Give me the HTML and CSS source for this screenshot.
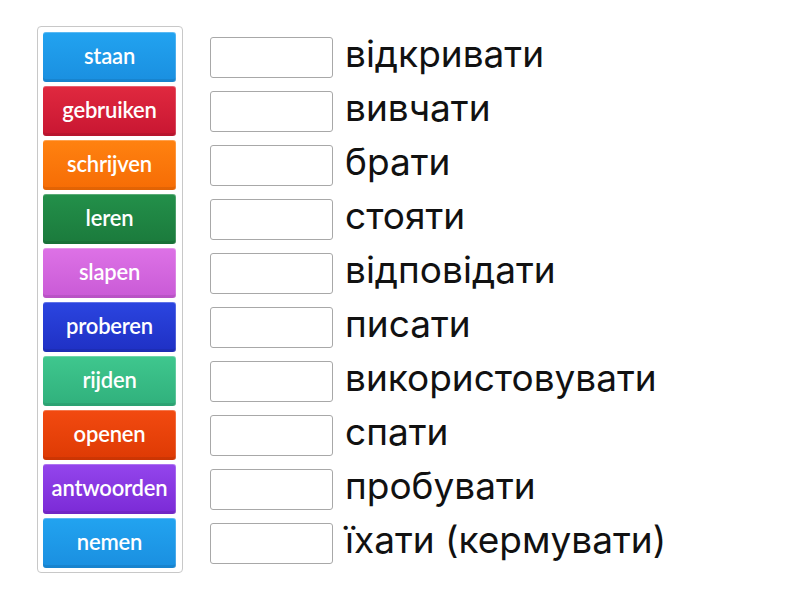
FILE: index.html
```html
<!DOCTYPE html>
<html>
<head>
<meta charset="utf-8">
<link rel="stylesheet" href="styles.css">
</head>
<body>
<div class="page">
  <div class="bank">
    <div class="tile blue">staan</div>
    <div class="tile red">gebruiken</div>
    <div class="tile orange">schrijven</div>
    <div class="tile green">leren</div>
    <div class="tile pink">slapen</div>
    <div class="tile indigo">proberen</div>
    <div class="tile teal">rijden</div>
    <div class="tile redorange">openen</div>
    <div class="tile purple">antwoorden</div>
    <div class="tile blue">nemen</div>
  </div>
  <div class="targets">
    <div class="row"><div class="box"></div><span class="word">відкривати</span></div>
    <div class="row"><div class="box"></div><span class="word">вивчати</span></div>
    <div class="row"><div class="box"></div><span class="word">брати</span></div>
    <div class="row"><div class="box"></div><span class="word">стояти</span></div>
    <div class="row"><div class="box"></div><span class="word">відповідати</span></div>
    <div class="row"><div class="box"></div><span class="word">писати</span></div>
    <div class="row"><div class="box"></div><span class="word">використовувати</span></div>
    <div class="row"><div class="box"></div><span class="word">спати</span></div>
    <div class="row"><div class="box"></div><span class="word">пробувати</span></div>
    <div class="row"><div class="box"></div><span class="word">їхати (кермувати)</span></div>
  </div>
</div>
</body>
</html>
```
FILE: styles.css
```css
html, body {
  margin: 0;
  padding: 0;
  background: #fff;
}
.page {
  display: flex;
  align-items: flex-start;
  padding: 26px 0 0 37px;
}
.bank {
  display: flex;
  flex-direction: column;
  gap: 4px;
  padding: 5px 6px 4px 5px;
  border: 1px solid #c8c8c8;
  border-radius: 4px;
  width: 133px;
}
.tile {
  height: 50px;
  box-sizing: border-box;
  padding-bottom: 4px;
  border-radius: 3px;
  display: flex;
  align-items: center;
  justify-content: center;
  color: #fff;
  font-family: Lato, "Open Sans", sans-serif;
  font-weight: 600;
  font-size: 22px;
  letter-spacing: -0.2px;
  white-space: nowrap;
  box-shadow: inset 0 1px 0 rgba(255,255,255,0.25), inset -1px 0 0 rgba(255,255,255,0.2), inset 0 -3px 0 rgba(0,0,0,0.08);
}
.blue { background: linear-gradient(#22a3f0, #1a8fe0); }
.red { background: linear-gradient(#e0293f, #c81632); }
.orange { background: linear-gradient(#ff8210, #f66c05); }
.green { background: linear-gradient(#23904a, #1b7a3c); }
.pink { background: linear-gradient(#dd72e6, #c95ad6); }
.indigo { background: linear-gradient(#2b45e0, #1f30c4); }
.teal { background: linear-gradient(#3fc78e, #30b07c); }
.redorange { background: linear-gradient(#f24a10, #de3a04); }
.purple { background: linear-gradient(#9445ec, #7b2ad6); }
.targets {
  display: flex;
  flex-direction: column;
  gap: 4px;
  margin-left: 27px;
  padding-top: 6px;
}
.row {
  height: 50px;
  display: flex;
  align-items: center;
}
.box {
  width: 121px;
  height: 39px;
  border: 1px solid #a8a8a8;
  border-radius: 3px;
  background: #fff;
  flex: none;
}
.word {
  margin-left: 12px;
  margin-bottom: 8px;
  font-family: Inter, "Noto Sans", sans-serif;
  font-size: 37px;
  color: #111;
  line-height: 1;
  white-space: nowrap;
}
```
